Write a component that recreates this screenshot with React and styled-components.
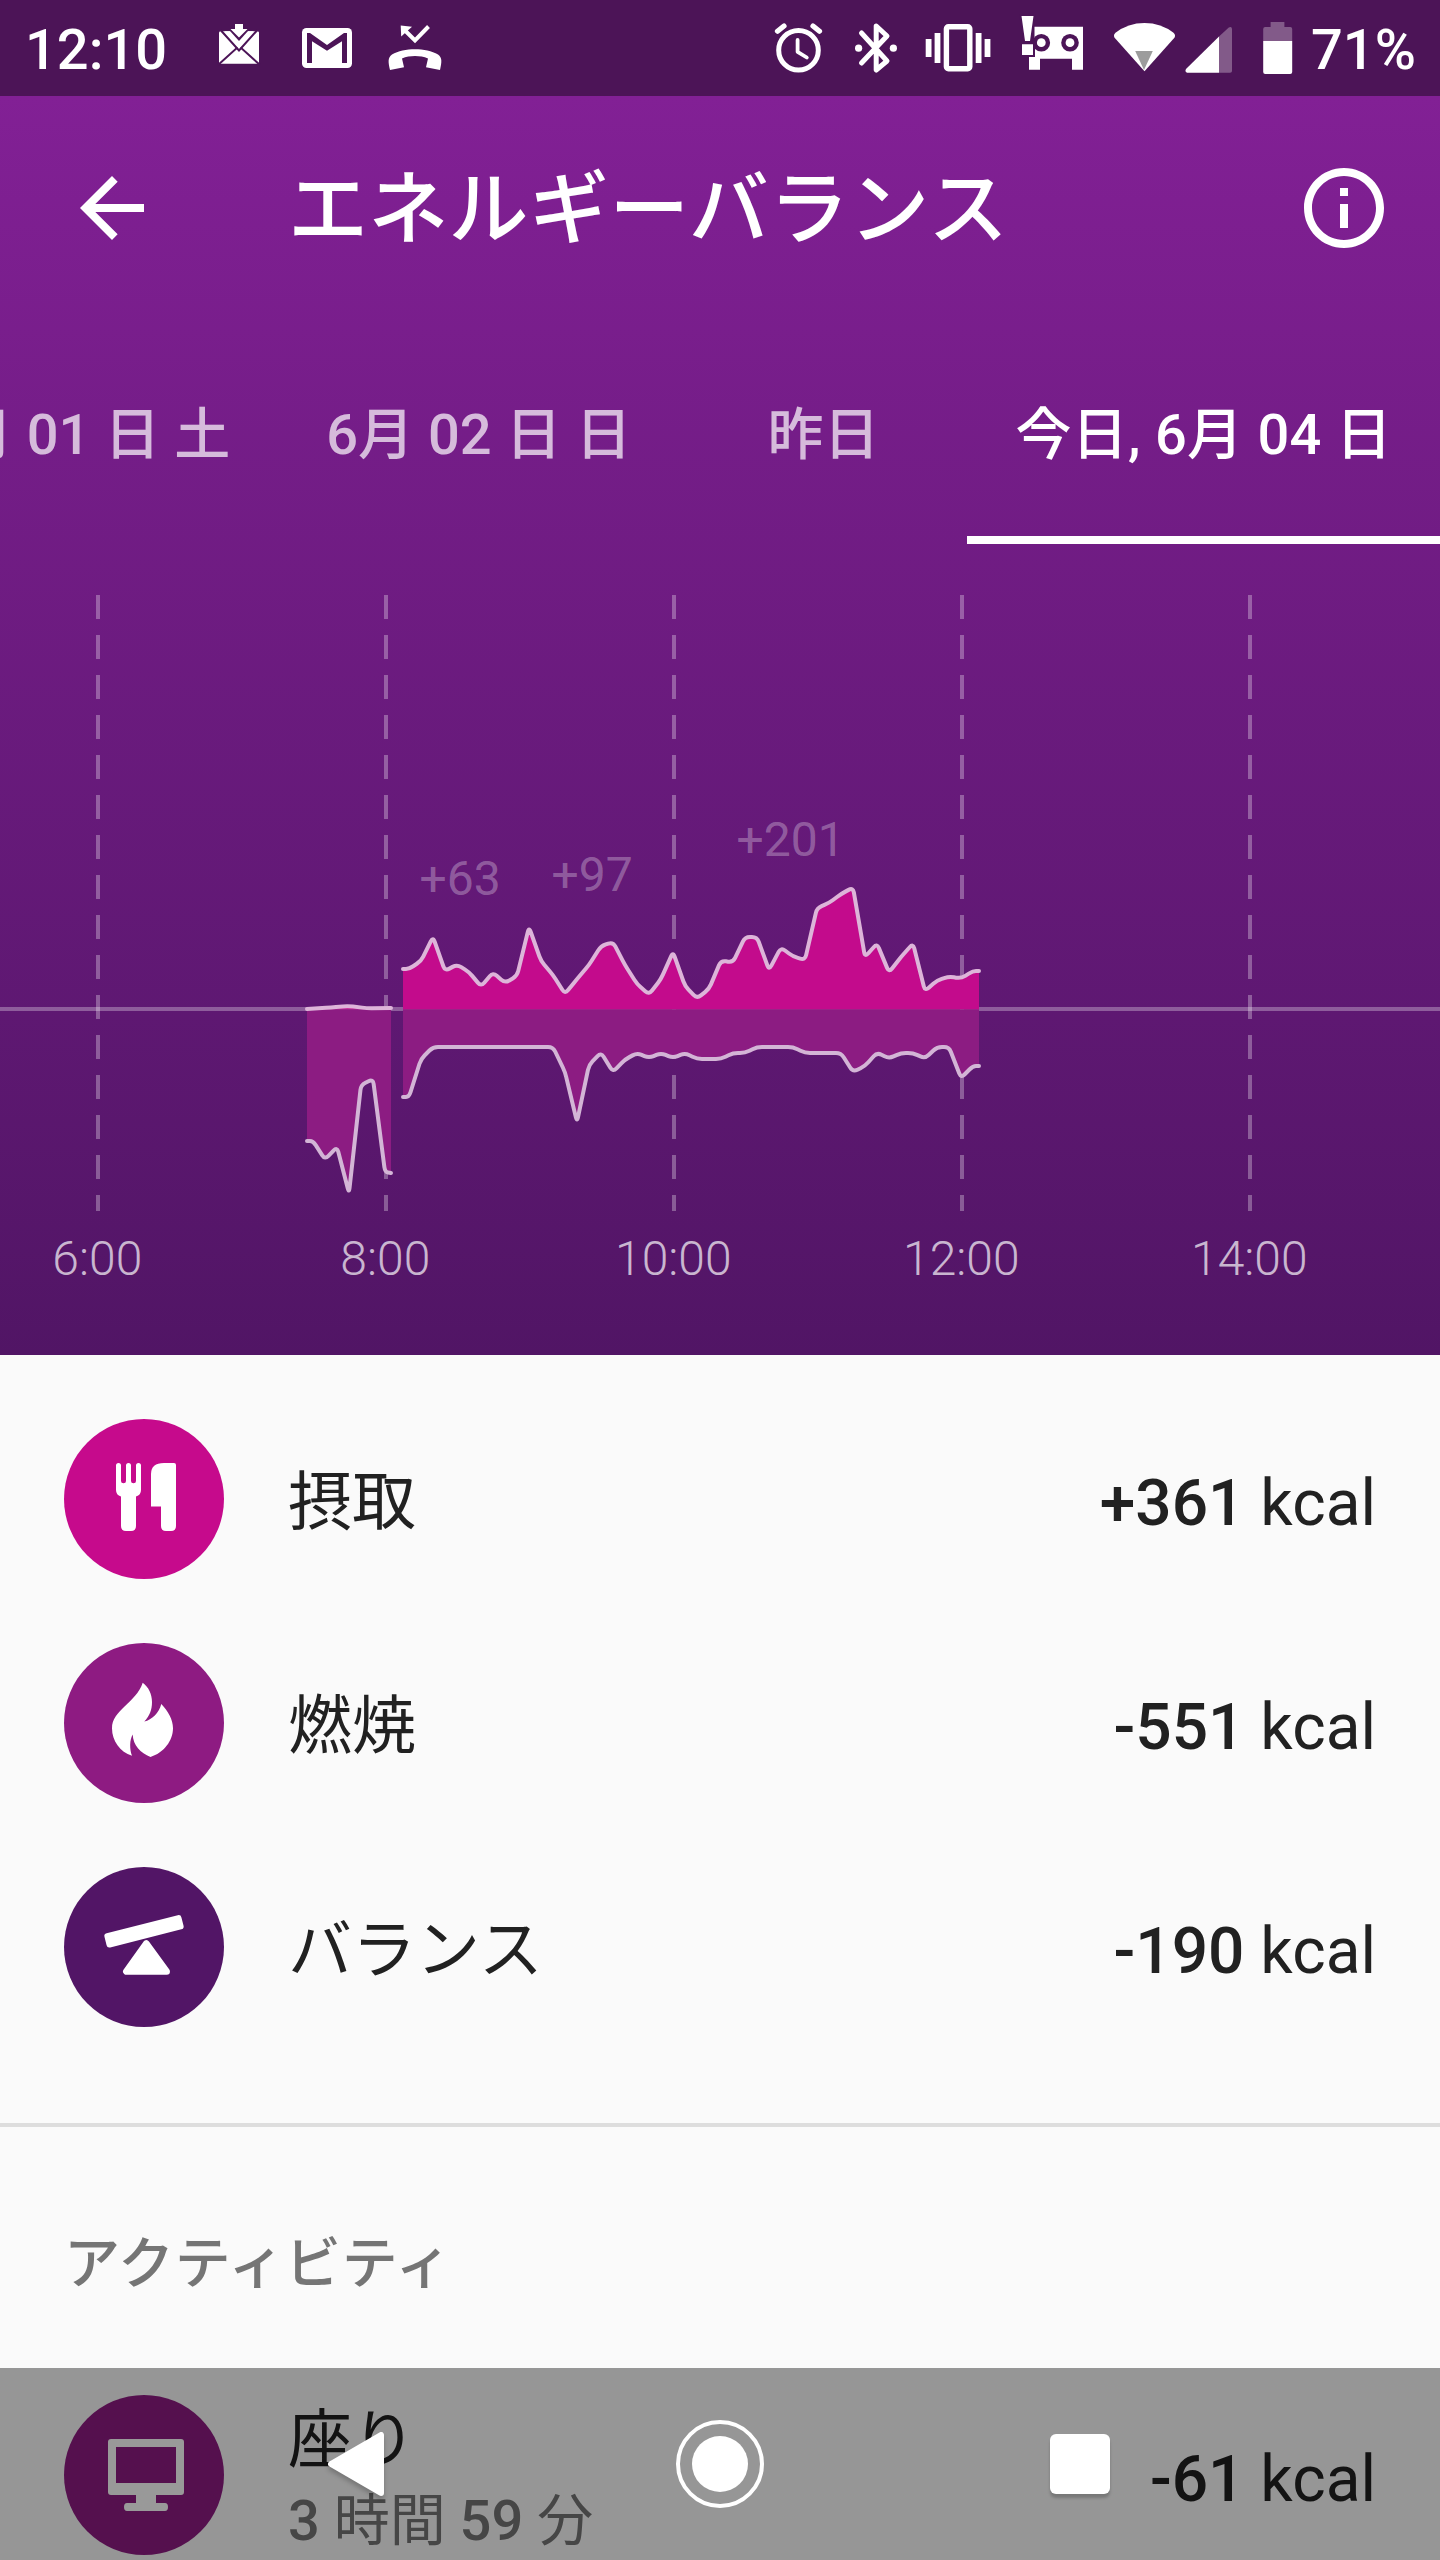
import styled, { createGlobalStyle } from "styled-components";

// 背景色
const STATUS_BG = "#4C1457";

// グラフの縦線 (2時間ごと)
const hours = [
    { x: 98, label: "6:00" },
    { x: 386, label: "8:00" },
    { x: 674, label: "10:00" },
    { x: 962, label: "12:00" },
    { x: 1250, label: "14:00" },
];

const meals = [
    { x: 419.5, y: 351, label: "+63" },
    { x: 551.5, y: 347, label: "+97" },
    { x: 736.5, y: 312, label: "+201" },
];

// 中心線の位置
const AXIS = 465;

// 12px (5分) ごとの中心線からの差分
const morningIn = [[307, 0], [331, 1.5], [348, 3], [367, 0.8], [391, 1]];
const morningOut = [
    [307, -132], [313, -132], [325, -150.5], [337, -138], [349, -184],
    [361, -76], [373, -70], [385, -163], [391, -164],
];

const intake = [
    40, 48, 72, 38, 44.5, 37, 22.5, 36.5, 26, 33, 82, 48, 34, 15, 30, 44, 63,
    67, 44, 25, 14.5, 30, 57, 23, 10.5, 20, 48.5, 46.5, 72, 72, 39, 61.5, 52.5,
    49, 101, 106, 115, 121.5, 52, 65.5, 36.5, 52, 65.5, 18, 28.5, 32.5, 30.5, 38,
];
const burned = [
    88, 50, 38, 38, 38, 38, 38, 38, 38, 38, 38, 38, 38, 63, 113, 56, 43.5, 63,
    50.5, 44, 49, 44, 49, 44, 50, 50, 50, 44, 44, 38, 38, 38, 38, 44, 44, 44, 44,
    63, 57, 43.5, 49.5, 44, 44, 49.5, 38, 38, 69, 57,
];

const toPoints = (values, sign) => [
    [403, values[0] * sign],
    ...values.map((v, i) => [409 + i * 12, v * sign]),
    [979, values[values.length - 1] * sign],
];

// 角を丸めた折れ線
const roundedLine = (points, radius = 5) => {
    const pts = points.map(([x, v]) => [x, AXIS - v]);
    const toward = (a, b) => {
        const len = Math.hypot(b[0] - a[0], b[1] - a[1]) || 1;
        const t = Math.min(radius, len / 2) / len;
        return [a[0] + (b[0] - a[0]) * t, a[1] + (b[1] - a[1]) * t];
    };
    let d = `M${pts[0][0]} ${pts[0][1]}`;
    for (let i = 1; i < pts.length - 1; i++) {
        const from = toward(pts[i], pts[i - 1]);
        const to = toward(pts[i], pts[i + 1]);
        d += `L${from[0]} ${from[1]}Q${pts[i][0]} ${pts[i][1]} ${to[0]} ${to[1]}`;
    }
    const last = pts[pts.length - 1];
    return `${d}L${last[0]} ${last[1]}`;
};

const Area = ({ points, color, stroke }) => {
    const line = roundedLine(points);
    const start = points[0][0];
    const end = points[points.length - 1][0];
    return (
        <g>
            <path d={`${line}L${end} ${AXIS + 0.3}L${start} ${AXIS + 0.3}Z`} fill={color} />
            <path
                d={line}
                fill="none"
                stroke={stroke}
                strokeWidth="4"
                strokeLinecap="round"
                strokeLinejoin="round"
            />
        </g>
    );
};

const EnergyChart = () => (
    <ChartSvg viewBox="0 0 1440 811">
        {hours.map(({ x, label }) => (
            <g key={label}>
                <line x1={x} y1="51" x2={x} y2="667" stroke="#fff" strokeOpacity="0.3" strokeWidth="4" strokeDasharray="24 16" />
                <HourText x={x - 0.7} y="731">{label}</HourText>
            </g>
        ))}
        <line x1="0" y1={AXIS} x2="1440" y2={AXIS} stroke="#fff" strokeOpacity="0.3" strokeWidth="4" />
        <Area points={morningOut} color="#8C1C82" stroke="#D3B5D6" />
        <Area points={morningIn} color="#C30B8C" stroke="#DDB5D9" />
        <Area points={toPoints(burned, -1)} color="#8C1C82" stroke="#D3B5D6" />
        <Area points={toPoints(intake, 1)} color="#C30B8C" stroke="#DDB5D9" />
        {meals.map(({ x, y, label }) => (
            <MealText key={label} x={x} y={y}>{label}</MealText>
        ))}
    </ChartSvg>
);

// 通知アイコン
const MailIcon = () => (
    <StatusSvg $width={88} viewBox="0 0 88 96">
        <rect x="24" y="31.3" width="40" height="32.5" rx="1.5" fill="#fff" />
        <path d="M23 65L44 46L65 65" fill="none" stroke={STATUS_BG} strokeWidth="2" />
        <path d="M29.5 31.3L44 49.5L58.5 31.3L35 31.3Z" fill="#fff" />
        <path d="M26 30.5L44 50.5L62 30.5" fill="none" stroke={STATUS_BG} strokeWidth="2" />
        <path d="M35 31L44 41L53 31Z" fill={STATUS_BG} />
        <path d="M40 24H48V29H52.5L44 37.5L35.5 29H40Z" fill="#fff" />
    </StatusSvg>
);

const GmailIcon = () => (
    <StatusSvg $width={88} viewBox="0 0 88 96">
        <rect x="19" y="28" width="50" height="40" rx="4.5" fill="#fff" />
        <path d="M24 33H27L44 45L61 33H64V63H59V41.3L44 50.7L29 41.3V63H24Z" fill={STATUS_BG} />
    </StatusSvg>
);

const MissedCallIcon = () => (
    <StatusSvg $width={88} viewBox="0 0 88 96">
        <path d="M33 29.5L44 40.5L57.5 26.5" fill="none" stroke="#fff" strokeWidth="4" />
        <path d="M29.7 25.5L41 26.7L30.2 36.6Z" fill="#fff" />
        <path
            d="M19 70C17.2 62 16.5 58 21 54.5C33 47.6 55 47.6 67 54.5C71.5 58 70.8 62 69 70L55 67.3L57 58.5C49 55.3 39 55.3 31 58.5L33 67.3Z"
            fill="#fff"
        />
    </StatusSvg>
);

// システムアイコン
const AlarmIcon = () => (
    <StatusSvg $width={78} viewBox="0 0 78 96">
        <g fill="none" stroke="#fff" strokeLinecap="round">
            <circle cx="38.5" cy="50.2" r="19.8" strokeWidth="5" />
            <path d="M37.6 40V51.8L46.8 57.5" strokeWidth="3.8" strokeLinejoin="round" />
            <path d="M17.5 31.2L24 26M59.5 31.2L53 26" strokeWidth="5.2" />
        </g>
    </StatusSvg>
);

const BluetoothIcon = () => (
    <StatusSvg $width={76} viewBox="0 0 76 96">
        <path
            d="M23.5 33L49 61L38.2 70V26L49 36L23.5 63"
            fill="none"
            stroke="#fff"
            strokeWidth="5"
            strokeLinecap="round"
            strokeLinejoin="round"
        />
        <circle cx="20.6" cy="48.2" r="3.6" fill="#fff" />
        <circle cx="55.4" cy="48.2" r="3.6" fill="#fff" />
    </StatusSvg>
);

const VibrateIcon = () => (
    <StatusSvg $width={90} viewBox="0 0 90 96">
        <rect x="32.4" y="26.7" width="23.4" height="42" rx="2" fill="none" stroke="#fff" strokeWidth="5.4" />
        <path
            d="M11.7 39H17.5V57H11.7ZM20.6 33H26.4V63H20.6ZM61.7 33H67.5V63H61.7ZM70.6 39H76.4V57H70.6Z"
            fill="#fff"
        />
    </StatusSvg>
);

const RobotIcon = () => (
    <StatusSvg $width={96} viewBox="0 0 96 96">
        <path d="M30.5 26.7H79V69.7H68V58.8H36V69.7H25V57H30.5Z" fill="#fff" />
        <circle cx="37.3" cy="42.7" r="8.8" fill={STATUS_BG} />
        <circle cx="66" cy="42.7" r="8.8" fill={STATUS_BG} />
        <circle cx="37.3" cy="42.7" r="4.4" fill="#fff" />
        <circle cx="66" cy="42.7" r="4.4" fill="#fff" />
        <path
            d="M17.5 16H29.5L26 41H21ZM18 44.3H29V55H18Z"
            fill="#fff"
            stroke={STATUS_BG}
            strokeWidth="4"
            paintOrder="stroke"
        />
    </StatusSvg>
);

const WifiIcon = () => (
    <StatusSvg $width={80} viewBox="0 0 80 96">
        <path
            d="M44.5 71.2L14.6 37.8Q13 35 15.5 32.8Q28 23 44.5 23Q61 23 73.5 32.8Q76 35 74.4 37.8Z"
            fill="#fff"
        />
        <path d="M35.2 51H52.8L44 70Z" fill="#9C9C9C" />
    </StatusSvg>
);

const SignalIcon = () => (
    <StatusSvg $width={68} viewBox="0 0 68 96">
        <path d="M39 36.5V72.8H50Q52 72.8 52 71V28.5Q51 26 48.5 27.8Z" fill="#fff" fillOpacity="0.3" />
        <path d="M39 36.5V72.8H7Q4.5 71.5 6 69Z" fill="#fff" />
    </StatusSvg>
);

const BatteryIcon = () => (
    <StatusSvg $width={58} viewBox="0 0 58 96">
        <path d="M15.2 41V29Q15.2 27 17.2 27H22.6V22H36.4V27H42.2Q44.2 27 44.2 29V41Z" fill="#fff" fillOpacity="0.3" />
        <path d="M15.2 41H44.2V72Q44.2 74 42.2 74H17.2Q15.2 74 15.2 72Z" fill="#fff" />
    </StatusSvg>
);

// ツールバー
const BackIcon = () => (
    <ToolSvg viewBox="0 0 24 24" fill="#fff">
        <path d="M20 11H7.83l5.59-5.59L12 4l-8 8 8 8 1.41-1.41L7.83 13H20v-2z" />
    </ToolSvg>
);

const InfoIcon = () => (
    <ToolSvg viewBox="0 0 24 24" fill="#fff">
        <path d="M11 17h2v-6h-2v6zm1-15C6.48 2 2 6.48 2 12s4.48 10 10 10 10-4.48 10-10S17.52 2 12 2zm0 18c-4.41 0-8-3.59-8-8s3.59-8 8-8 8 3.59 8 8-3.59 8-8 8zM11 9h2V7h-2v2z" />
    </ToolSvg>
);

// 丸アイコンの中身
const MealIcon = () => (
    <svg viewBox="0 0 160 160" fill="#fff">
        <path d="M52 46.5Q52 44 54.5 44Q57 44 57 46.5V62Q57 64.3 59.5 64.3Q62 64.3 62 62V46.5Q62 44 64.5 44Q67 44 67 46.5V62Q67 64.3 69.5 64.3Q72 64.3 72 62V46.5Q72 44 74.5 44Q77 44 77 46.5V71Q77 76 72 77.5V107Q72 112 67 112H62Q57 112 57 107V77.5Q52 76 52 71Z" />
        <path d="M87 55Q87 44 100 44H110Q112 44 112 46V107Q112 112 107 112H102Q97 112 97 107V87.5H87Z" />
    </svg>
);

const FlameIcon = () => (
    <svg viewBox="0 0 160 160" fill="#fff">
        <path d="M78.7 39.8C84.5 44 88 51 88 59C88 67 85.5 73 80.3 78.5C88 76.5 95 70 97.3 60.9C104 68 109 76 109 85.3C109 98 99.5 110 86.5 114C76.5 110 69 102 68.7 91.5C65.5 97 65.5 106 68 112.8C56 109 48 98 48 85.3C48 67 72 60 78.7 39.8Z" />
    </svg>
);

const BalanceIcon = () => (
    <svg viewBox="0 0 160 160" fill="#fff">
        <rect x="40.3" y="57" width="79.4" height="14.6" rx="3" transform="rotate(-14.2 80 64.3)" />
        <path d="M82.3 76.5L62.3 104.5H102.7Z" stroke="#fff" strokeWidth="6.5" strokeLinejoin="round" />
    </svg>
);

const MonitorIcon = () => (
    <svg viewBox="0 0 160 160" fill="#fff">
        <path
            fillRule="evenodd"
            d="M47 44H117Q120 44 120 47V97Q120 100 117 100H92V108H101Q104 108 104 112Q104 116 101 116H63Q60 116 60 112Q60 108 63 108H72V100H47Q44 100 44 97V47Q44 44 47 44ZM52 52V88H112V52Z"
        />
    </svg>
);

const tabs = [
    { label: "6月 01 日 土" },
    { label: "6月 02 日 日" },
    { label: "昨日" },
    { label: "今日, 6月 04 日", active: true },
];

const summary = [
    { label: "摂取", value: "+361", color: "#C60A8C", icon: <MealIcon /> },
    { label: "燃焼", value: "-551", color: "#8E1B82", icon: <FlameIcon /> },
    { label: "バランス", value: "-190", color: "#521566", icon: <BalanceIcon /> },
];

export default function App() {
    return (
        <Screen>
            <GlobalStyle />

            {/* ステータスバー */}
            <StatusBar>
                <Clock>12:10</Clock>
                <MailIcon />
                <GmailIcon />
                <MissedCallIcon />
                <SystemIcons>
                    <AlarmIcon />
                    <BluetoothIcon />
                    <VibrateIcon />
                    <RobotIcon />
                    <WifiIcon />
                    <SignalIcon />
                    <BatteryIcon />
                    <Percent>71%</Percent>
                </SystemIcons>
            </StatusBar>

            {/* ヘッダー */}
            <Header>
                <Toolbar>
                    <BackIcon />
                    <Title>エネルギーバランス</Title>
                    <InfoIcon />
                </Toolbar>
                <TabBar>
                    {tabs.map(({ label, active }) => (
                        <Tab key={label} $active={active}>{label}</Tab>
                    ))}
                </TabBar>
                <EnergyChart />
            </Header>

            {/* 合計 */}
            <SummaryList>
                {summary.map(({ label, value, color, icon }) => (
                    <Row key={label}>
                        <Badge $color={color}>{icon}</Badge>
                        <RowLabel>{label}</RowLabel>
                        <Amount><b>{value}</b> kcal</Amount>
                    </Row>
                ))}
            </SummaryList>

            {/* アクティビティ */}
            <SectionTitle>アクティビティ</SectionTitle>
            <Row>
                <Badge $color="#8E1B82"><MonitorIcon /></Badge>
                <RowBody>
                    <RowLabel>座り</RowLabel>
                    <Duration><b>3</b> 時間 <b>59</b> 分</Duration>
                </RowBody>
                <Amount><b>-61</b> kcal</Amount>
            </Row>

            {/* ナビゲーションバー */}
            <NavBar>
                <svg width="66" height="72" viewBox="0 0 66 72">
                    <path d="M7 36L57 7V65Z" fill="#fff" stroke="#fff" strokeWidth="6" strokeLinejoin="round" />
                </svg>
                <HomeButton />
                <RecentButton />
            </NavBar>
        </Screen>
    );
}

// CSS
const GlobalStyle = createGlobalStyle`
    body {
        margin: 0;
        background-color: #FAFAFA;
    }
`;

const Screen = styled.div`
    position: relative;
    width: 1440px;
    height: 2560px;
    overflow: hidden;
    background-color: #FAFAFA;
    color: #212121;
    font-family: Roboto, "Noto Sans CJK JP", sans-serif;
    b {
        font-weight: 500;
    }
`;

const StatusBar = styled.div`
    display: flex;
    height: 96px;
    background-color: ${STATUS_BG};
    color: #fff;
    font-size: 56px;
    font-weight: 500;
    line-height: 100px;
`;

const Clock = styled.div`
    box-sizing: border-box;
    width: 195px;
    padding-left: 25px;
    white-space: nowrap;
`;

const StatusSvg = styled.svg`
    flex: none;
    width: ${({ $width }) => $width}px;
    height: 96px;
`;

const SystemIcons = styled.div`
    display: flex;
    margin-left: auto;
`;

const Percent = styled.div`
    width: 129px;
    padding-left: 5px;
`;

const Header = styled.div`
    height: 1259px;
    background: linear-gradient(#822095, #511565);
    color: #fff;
`;

const Toolbar = styled.div`
    display: flex;
    align-items: center;
    height: 224px;
    padding: 0 48px 0 64px;
`;

const ToolSvg = styled.svg`
    flex: none;
    width: 96px;
    height: 96px;
`;

const Title = styled.div`
    flex: 1;
    margin-left: 128px;
    padding-top: 4px;
    font-size: 80px;
    font-weight: 500;
    letter-spacing: 0.3px;
    line-height: 96px;
`;

const TabBar = styled.div`
    display: flex;
    justify-content: flex-end;
    height: 224px;
`;

const Tab = styled.div`
    box-sizing: border-box;
    flex: none;
    display: flex;
    align-items: center;
    justify-content: center;
    min-width: 288px;
    padding: 2px 48px 0;
    border-bottom: 8px solid ${({ $active }) => ($active ? "#fff" : "transparent")};
    color: ${({ $active }) => ($active ? "#fff" : "rgba(255, 255, 255, 0.7)")};
    font-size: 56px;
    font-weight: 500;
    letter-spacing: ${({ $active }) => ($active ? "0.25px" : "normal")};
    white-space: nowrap;
`;

const ChartSvg = styled.svg`
    display: block;
    width: 1440px;
    height: 811px;
`;

const HourText = styled.text`
    fill: rgba(255, 255, 255, 0.7);
    font-size: 48px;
    font-weight: 300;
    text-anchor: middle;
`;

const MealText = styled.text`
    fill: rgba(255, 255, 255, 0.3);
    font-size: 48px;
`;

const SummaryList = styled.div`
    padding: 32px 0 64px;
    border-bottom: 4px solid #DDDDDD;
`;

const Row = styled.div`
    display: flex;
    align-items: center;
    height: 224px;
    padding: 0 64px;
`;

const Badge = styled.div`
    flex: none;
    width: 160px;
    height: 160px;
    margin-right: 64px;
    border-radius: 50%;
    background-color: ${({ $color }) => $color};
    svg {
        display: block;
    }
`;

const RowBody = styled.div`
    display: flex;
    flex-direction: column;
`;

const RowLabel = styled.div`
    padding-top: 7px;
    font-size: 64px;
    line-height: 84px;
`;

const Duration = styled.div`
    color: #757575;
    font-size: 56px;
    line-height: 76px;
`;

const Amount = styled.div`
    margin-left: auto;
    padding-top: 9px;
    font-size: 64px;
    line-height: 80px;
`;

const SectionTitle = styled.div`
    height: 236px;
    box-sizing: border-box;
    padding: 97px 64px 0;
    color: #757575;
    font-size: 56px;
    font-weight: 500;
    letter-spacing: 0.8px;
    line-height: 80px;
`;

const NavBar = styled.div`
    position: absolute;
    left: 0;
    right: 0;
    bottom: 0;
    display: flex;
    align-items: center;
    justify-content: space-between;
    height: 192px;
    box-sizing: border-box;
    padding: 0 330px 0 324px;
    background-color: rgba(0, 0, 0, 0.4);
    svg {
        filter: drop-shadow(0 4px 2px rgba(0, 0, 0, 0.2));
    }
`;

const HomeButton = styled.div`
    box-sizing: border-box;
    width: 88px;
    height: 88px;
    padding: 12px;
    border: 4px solid #fff;
    border-radius: 50%;
    &::before {
        content: "";
        display: block;
        height: 56px;
        border-radius: 50%;
        background-color: #fff;
    }
`;

const RecentButton = styled.div`
    width: 60px;
    height: 60px;
    border-radius: 6px;
    background-color: #fff;
    box-shadow: 0 4px 3px rgba(0, 0, 0, 0.2);
`;
